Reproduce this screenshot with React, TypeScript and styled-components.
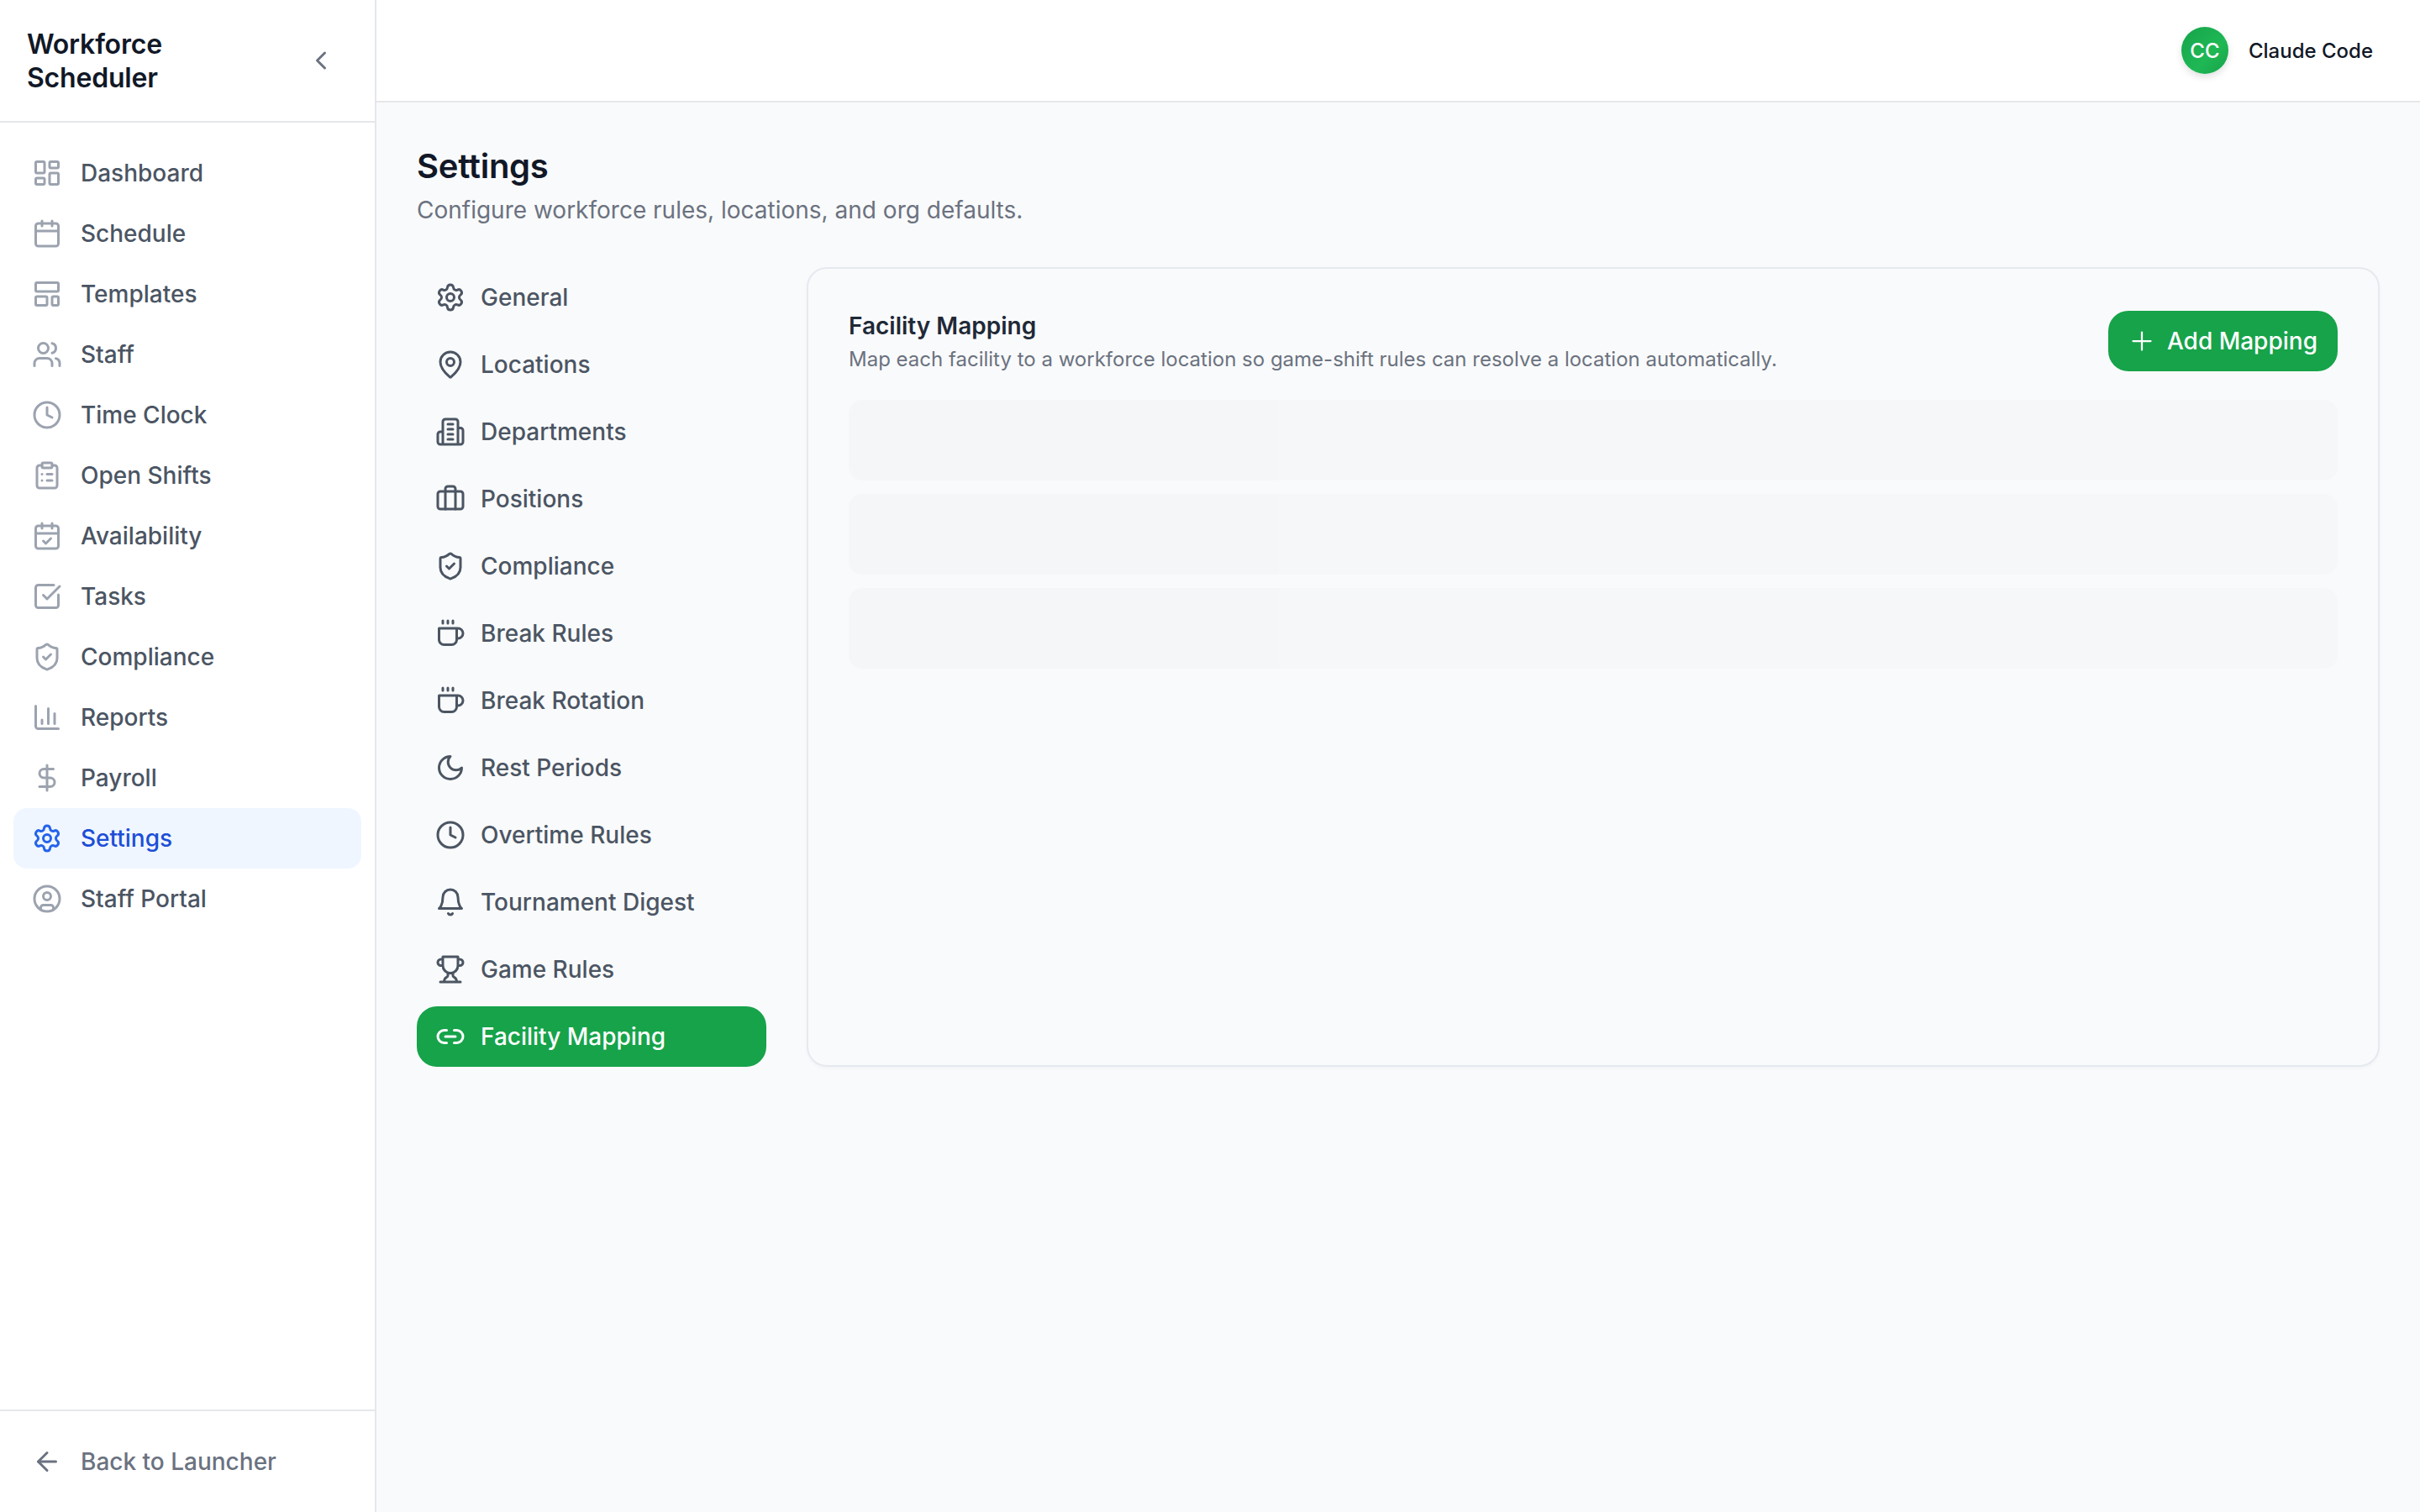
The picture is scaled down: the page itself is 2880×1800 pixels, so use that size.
import React from 'react'
import styled, { createGlobalStyle } from 'styled-components'
import {
  ArrowLeft,
  Briefcase,
  Calendar,
  CalendarCheck,
  ChartColumn,
  ChevronLeft,
  CircleUser,
  ClipboardList,
  Clock,
  DollarSign,
  LayoutDashboard,
  LayoutTemplate,
  Link2,
  MapPin,
  Plus,
  Settings,
  ShieldCheck,
  SquareCheckBig,
  Users,
} from 'lucide-react'

function Glyph({ d }: { d: string }) {
  return (
    <svg
      width={36}
      height={36}
      viewBox="0 0 24 24"
      fill="none"
      stroke="currentColor"
      strokeWidth={2}
      strokeLinecap="round"
      strokeLinejoin="round"
    >
      <path d={d} />
    </svg>
  )
}

const Building = () => (
  <Glyph d="M6 22V4a2 2 0 0 1 2-2h8a2 2 0 0 1 2 2v18Z M6 12H4a2 2 0 0 0-2 2v6a2 2 0 0 0 2 2h2 M18 9h2a2 2 0 0 1 2 2v9a2 2 0 0 1-2 2h-2 M10 6h4 M10 10h4 M10 14h4 M10 18h4" />
)
const Cup = () => (
  <Glyph d="M17 8h1a4 4 0 1 1 0 8h-1 M3 8h14v9a4 4 0 0 1-4 4H7a4 4 0 0 1-4-4Z M6 2v2 M10 2v2 M14 2v2" />
)
const Crescent = () => <Glyph d="M12 3a6 6 0 0 0 9 9 9 9 0 1 1-9-9Z" />
const BellIcon = () => (
  <Glyph d="M6 8a6 6 0 0 1 12 0c0 7 3 9 3 9H3s3-2 3-9 M10.3 21a1.94 1.94 0 0 0 3.4 0" />
)
const TrophyIcon = () => (
  <Glyph d="M6 9H4.5a2.5 2.5 0 0 1 0-5H6 M18 9h1.5a2.5 2.5 0 0 0 0-5H18 M4 22h16 M10 14.66V17c0 .55-.47.98-.97 1.21C7.85 18.75 7 20.24 7 22 M14 14.66V17c0 .55.47.98.97 1.21C16.15 18.75 17 20.24 17 22 M18 2H6v7a6 6 0 0 0 12 0V2Z" />
)

const mainLinks = [
  { label: 'Dashboard', icon: LayoutDashboard },
  { label: 'Schedule', icon: Calendar },
  { label: 'Templates', icon: LayoutTemplate },
  { label: 'Staff', icon: Users },
  { label: 'Time Clock', icon: Clock },
  { label: 'Open Shifts', icon: ClipboardList },
  { label: 'Availability', icon: CalendarCheck },
  { label: 'Tasks', icon: SquareCheckBig },
  { label: 'Compliance', icon: ShieldCheck },
  { label: 'Reports', icon: ChartColumn },
  { label: 'Payroll', icon: DollarSign },
  { label: 'Settings', icon: Settings, active: true },
  { label: 'Staff Portal', icon: CircleUser },
]

const settingsLinks = [
  { label: 'General', icon: Settings },
  { label: 'Locations', icon: MapPin },
  { label: 'Departments', icon: Building },
  { label: 'Positions', icon: Briefcase },
  { label: 'Compliance', icon: ShieldCheck },
  { label: 'Break Rules', icon: Cup },
  { label: 'Break Rotation', icon: Cup },
  { label: 'Rest Periods', icon: Crescent },
  { label: 'Overtime Rules', icon: Clock },
  { label: 'Tournament Digest', icon: BellIcon },
  { label: 'Game Rules', icon: TrophyIcon },
  { label: 'Facility Mapping', icon: Link2, active: true },
]

export default function App() {
  return (
    <S.Page>
      <GlobalStyle />
      <S.Sidebar>
        <S.Brand>
          <S.BrandName>Workforce Scheduler</S.BrandName>
          <S.Collapse>
            <ChevronLeft size={36} />
          </S.Collapse>
        </S.Brand>
        <S.MainNav>
          {mainLinks.map(({ label, icon: Icon, active }) => (
            <S.MainLink key={label} $active={active}>
              <Icon size={36} />
              {label}
            </S.MainLink>
          ))}
        </S.MainNav>
        <S.SidebarFooter>
          <S.BackLink>
            <ArrowLeft size={36} />
            Back to Launcher
          </S.BackLink>
        </S.SidebarFooter>
      </S.Sidebar>

      <S.Main>
        <S.TopBar>
          <S.Avatar>CC</S.Avatar>
          <S.UserName>Claude Code</S.UserName>
        </S.TopBar>
        <S.Content>
          <S.Title>Settings</S.Title>
          <S.Subtitle>Configure workforce rules, locations, and org defaults.</S.Subtitle>
          <S.Columns>
            <S.SettingsNav>
              {settingsLinks.map(({ label, icon: Icon, active }) => (
                <S.SettingsLink key={label} $active={active}>
                  <Icon size={36} />
                  {label}
                </S.SettingsLink>
              ))}
            </S.SettingsNav>
            <S.Card>
              <S.CardHead>
                <div>
                  <S.CardTitle>Facility Mapping</S.CardTitle>
                  <S.CardText>
                    Map each facility to a workforce location so game-shift rules can resolve a
                    location automatically.
                  </S.CardText>
                </div>
                <S.AddButton>
                  <Plus size={36} strokeWidth={1.5} />
                  Add Mapping
                </S.AddButton>
              </S.CardHead>
              <S.Skeletons>
                <S.SkeletonRow />
                <S.SkeletonRow />
                <S.SkeletonRow />
              </S.Skeletons>
            </S.Card>
          </S.Columns>
        </S.Content>
      </S.Main>
    </S.Page>
  )
}

const GlobalStyle = createGlobalStyle`
  * {
    box-sizing: border-box;
  }

  body {
    margin: 0;
    font-family: Inter, "Liberation Sans", sans-serif;
    background: #f9fafb;
  }
`

const S = {
  Page: styled.div`
    display: flex;
    height: 100vh;
    overflow: hidden;
  `,

  Sidebar: styled.aside`
    display: flex;
    flex-direction: column;
    flex: none;
    width: 448px;
    background: #fff;
    border-right: 2px solid #e5e7eb;
  `,

  Brand: styled.div`
    display: flex;
    align-items: center;
    justify-content: space-between;
    height: 146px;
    padding: 0 32px;
    border-bottom: 2px solid #e5e7eb;
  `,

  BrandName: styled.div`
    width: 200px;
    margin-top: 2px;
    font-size: 32px;
    line-height: 40px;
    font-weight: 600;
    letter-spacing: -0.2px;
    color: #111827;
  `,

  Collapse: styled.div`
    display: flex;
    justify-content: center;
    width: 64px;
    color: #6b7280;
  `,

  MainNav: styled.nav`
    flex: 1;
    padding: 24px 16px;
  `,

  MainLink: styled.a<{ $active?: boolean }>`
    display: flex;
    align-items: center;
    gap: 22px;
    height: 72px;
    padding-left: 22px;
    border-radius: 16px;
    font-size: 28px;
    font-weight: 500;
    color: ${p => (p.$active ? '#1d4ed8' : '#4b5563')};
    background: ${p => (p.$active ? '#eff6ff' : 'transparent')};

    svg {
      flex: none;
      color: ${p => (p.$active ? '#2563eb' : '#9ca3af')};
    }
  `,

  SidebarFooter: styled.div`
    height: 122px;
    padding: 24px 16px;
    border-top: 2px solid #e5e7eb;
  `,

  BackLink: styled.a`
    display: flex;
    align-items: center;
    gap: 22px;
    height: 72px;
    padding-left: 22px;
    font-size: 28px;
    font-weight: 500;
    color: #6b7280;
  `,

  Main: styled.div`
    display: flex;
    flex-direction: column;
    flex: 1;
    min-width: 0;
  `,

  TopBar: styled.header`
    display: flex;
    align-items: center;
    justify-content: flex-end;
    gap: 24px;
    flex: none;
    height: 122px;
    padding: 0 56px 0 0;
    background: #fff;
    border-bottom: 2px solid #e5e7eb;
  `,

  Avatar: styled.div`
    display: flex;
    align-items: center;
    justify-content: center;
    width: 56px;
    height: 56px;
    border-radius: 50%;
    background: linear-gradient(135deg, #16a34a, #1fb855 60%, #16a34a);
    box-shadow: 0 4px 8px rgba(0, 0, 0, 0.12);
    font-size: 24px;
    font-weight: 500;
    color: #fff;
  `,

  UserName: styled.div`
    font-size: 24px;
    font-weight: 500;
    color: #111827;
  `,

  Content: styled.main`
    flex: 1;
    padding: 50px 48px 0;
  `,

  Title: styled.h1`
    margin: 0;
    font-size: 40px;
    line-height: 52px;
    font-weight: 600;
    letter-spacing: -0.25px;
    color: #111827;
  `,

  Subtitle: styled.p`
    margin: 0;
    font-size: 28px;
    line-height: 52px;
    color: #6b7280;
  `,

  Columns: styled.div`
    display: flex;
    gap: 48px;
    margin-top: 42px;
  `,

  SettingsNav: styled.nav`
    display: flex;
    flex-direction: column;
    gap: 8px;
    flex: none;
    width: 416px;
  `,

  SettingsLink: styled.a<{ $active?: boolean }>`
    display: flex;
    align-items: center;
    gap: 18px;
    height: 72px;
    padding-left: 22px;
    border-radius: 24px;
    font-size: 28px;
    font-weight: 500;
    color: ${p => (p.$active ? '#fff' : '#4b5563')};
    background: ${p => (p.$active ? '#16a34a' : 'transparent')};

    svg {
      flex: none;
    }
  `,

  Card: styled.section`
    flex: 1;
    min-width: 0;
    padding: 48px;
    border: 2px solid #e5e9f0;
    border-radius: 24px;
    background: #f9fafb;
    box-shadow: 0 2px 4px rgba(0, 0, 0, 0.03);
  `,

  CardHead: styled.div`
    display: flex;
    align-items: flex-start;
    justify-content: space-between;
  `,

  CardTitle: styled.h2`
    margin: 0;
    font-size: 28px;
    line-height: 40px;
    font-weight: 600;
    color: #1f2937;
  `,

  CardText: styled.p`
    margin: 2px 0 0;
    font-size: 24px;
    line-height: 36px;
    color: #6b7280;
  `,

  AddButton: styled.button`
    display: flex;
    align-items: center;
    gap: 12px;
    height: 72px;
    margin-top: 2px;
    padding: 0 24px 0 22px;
    border: none;
    border-radius: 24px;
    background: #16a34a;
    font-family: inherit;
    font-size: 28px;
    font-weight: 500;
    color: #fff;
  `,

  Skeletons: styled.div`
    display: flex;
    flex-direction: column;
    gap: 16px;
    margin-top: 30px;
  `,

  SkeletonRow: styled.div`
    height: 96px;
    border-radius: 16px;
    background: linear-gradient(90deg, #f5f6f8 28.9%, #f6f7f9 28.9%);
  `,
}
